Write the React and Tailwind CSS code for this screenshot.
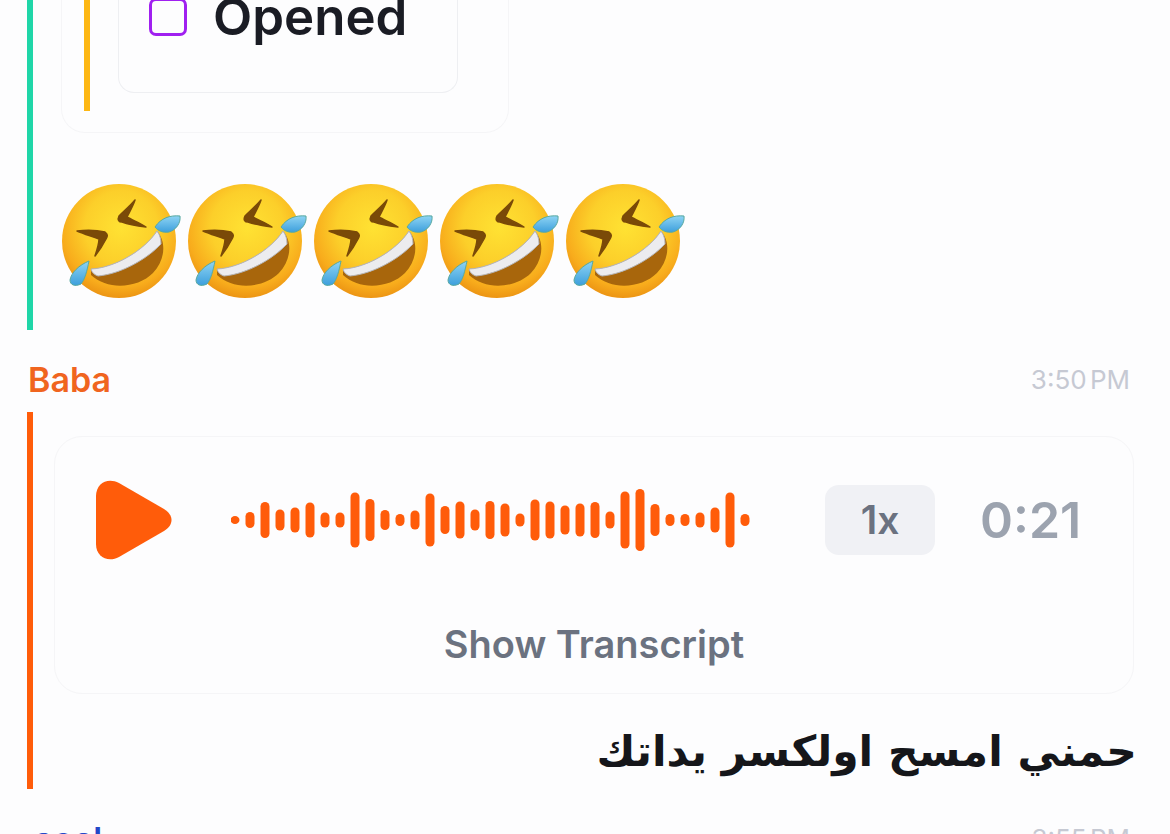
const bars = [8,16,36,21,25,35,15,15,55,42,20,12,19,53,28,37,21,38,33,13,41,37,29,33,36,17,57,62,32,12,12,15,25,55,12];

function Emoji({ id }) {
  return (
    <svg viewBox="0 0 122 116" className="h-[116px] w-[122px] shrink-0">
      <defs>
        <radialGradient id={`f${id}`} cx="0.52" cy="0.38" r="0.64">
          <stop offset="0" stopColor="#ffe233" />
          <stop offset="0.5" stopColor="#fccf2a" />
          <stop offset="0.82" stopColor="#f8ac1c" />
          <stop offset="1" stopColor="#ea9012" />
        </radialGradient>
        <linearGradient id={`d${id}`} x1="0" y1="0" x2="0" y2="1">
          <stop offset="0" stopColor="#8ed4f4" />
          <stop offset="1" stopColor="#3d9fdc" />
        </linearGradient>
      </defs>
      <circle cx="57" cy="58" r="57" fill={`url(#f${id})`} />
      <path d="M29 86 C52 85 82 68 95 48 C104 58 104 76 91 90 C76 105 46 108 29 92 Z" fill="#a8660c" />
      <path d="M29 86 C52 85 82 68 95 48 C98 52 99 56 99 61 C84 77 58 91 36 93 C33 92 30 90 29 86 Z" fill="#ececef" stroke="#b5b5b8" strokeWidth="1" />
      <path d="M73 17 C68 23 62 28 57 33 C55 37 57 39 60 39 C68 42 76 43 84 44 C78 40 70 37 65 34 C68 28 71 23 73 17 Z" fill="#7a4a08" stroke="#7a4a08" strokeWidth="1.5" strokeLinejoin="round" />
      <path d="M15 48 C24 47 34 47 43 49 C46 51 46 53 44 56 C41 62 37 68 33 73 C35 67 37 61 37 56 C29 53 22 51 15 48 Z" fill="#7a4a08" stroke="#7a4a08" strokeWidth="1.5" strokeLinejoin="round" />
      <path d="M93 44 C99 35 108 32 118 33 C119 40 114 47 107 49 C101 50 96 48 93 44 Z" fill={`url(#d${id})`} stroke="#58a9a0" strokeWidth="1" />
      <path d="M27 78 C25 88 23 96 19 101 C13 104 8 102 8 97 C9 90 17 82 27 78 Z" fill={`url(#d${id})`} stroke="#58a9a0" strokeWidth="1" />
    </svg>
  );
}

export default function App() {
  return (
    <div className="h-[834px] w-[1170px] overflow-hidden bg-[#fdfdfe] font-['Inter','Liberation_Sans',sans-serif]">
      <div className="-mt-[100px] flex flex-col">
        <div className="ml-[27px] h-[430px] w-[1100px] border-l-[6px] border-[#1fd6a8] pl-[28px]">
          <div className="h-[233px] w-[448px] rounded-b-[24px] border border-t-0 border-[#f5f5f7] pl-[22px]">
            <div className="flex h-[211px] border-l-[6px] border-[#fdb714] pl-[28px]">
              <div className="h-[193px] w-[340px] rounded-b-[16px] border border-t-0 border-[#eeeff2] pl-[30px]">
                <div className="flex items-center gap-[26px] pt-[89px]">
                  <span className="size-[38px] rounded-[7px] border-[3px] border-[#a020f0]" />
                  <span className="text-[51px] leading-[56px] font-semibold text-[#1a1c24]">Opened</span>
                </div>
              </div>
            </div>
          </div>
          <div className="ml-[1px] mt-[50px] flex gap-[4px]">
            {[0, 1, 2, 3, 4].map((i) => <Emoji key={i} id={i} />)}
          </div>
        </div>
        <div className="mt-[29px] flex h-[40px] items-center justify-between pl-[28px] pr-[40px]">
          <span className="text-[34px] font-semibold text-[#f0651f]">Baba</span>
          <span className="text-[26px] text-[#c6c9d3] [word-spacing:-4px]">3:50 PM</span>
        </div>
        <div className="ml-[27px] mt-[13px] h-[377px] w-[1107px] border-l-[6px] border-[#ff5c0a] pl-[21px] pt-[24px]">
          <div className="h-[258px] w-[1080px] rounded-[28px] border border-[#f5f5f7] pt-[43px]">
            <div className="flex h-[80px] items-center pl-[41px]">
              <svg viewBox="0 0 76 80" className="h-[80px] w-[76px] shrink-0">
                <path d="M0 16 C0 3 12 -3 23 3 L68 29 C78 35 78 45 68 51 L23 77 C12 83 0 77 0 64 Z" fill="#ff5c0a" />
              </svg>
              <svg viewBox="0 0 520 64" className="ml-[59px] h-[64px] w-[520px] shrink-0">
                {bars.map((h, i) => (
                  <rect key={i} x={i * 15 - 0.5} y={32 - h / 2} width="9" height={h} rx="4.5" fill="#ff5c0a" />
                ))}
              </svg>
              <div className="ml-[74px] flex h-[70px] w-[110px] items-center justify-center rounded-[14px] bg-[#f0f1f5] text-[39px] font-semibold text-[#6b7280]">1x</div>
              <span className="ml-[45px] text-[50px] font-semibold text-[#9ca3af]">0:21</span>
            </div>
            <div className="mt-[60px] text-center text-[38px] leading-[48px] font-semibold text-[#6b7280]">Show Transcript</div>
          </div>
          <div dir="rtl" className="mt-[28px] w-[1083px] font-['DejaVu_Sans',sans-serif] text-[42.5px] leading-[60px] font-bold text-[#15161a]">حمني امسح اولكسر يداتك</div>
        </div>
        <div className="mt-[31px] flex items-start justify-between pl-[34px] pr-[40px]">
          <span className="text-[34px] leading-[40px] font-semibold text-[#2348c8]">soal</span>
          <span className="pt-[1px] text-[26px] leading-[36px] text-[#c6c9d3] [word-spacing:-4px]">3:55 PM</span>
        </div>
      </div>
    </div>
  );
}
